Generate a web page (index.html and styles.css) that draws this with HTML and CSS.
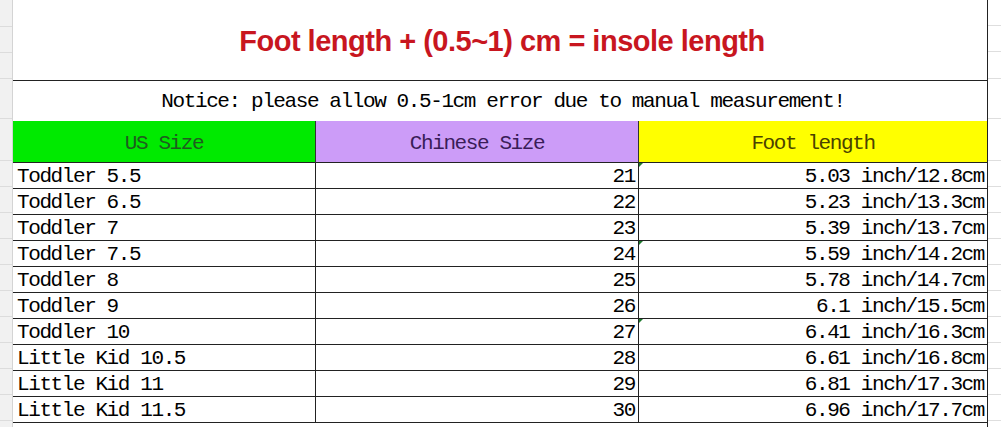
FILE: index.html
```html
<!DOCTYPE html>
<html>
<head>
<meta charset="utf-8">
<link rel="stylesheet" href="styles.css">
</head>
<body>
<div class="sheet">
  <div class="gutter gutter-left">
    <div class="g" style="height:27px"></div>
    <div class="g" style="height:26px"></div>
    <div class="g" style="height:26px"></div>
    <div class="g" style="height:40px"></div>
    <div class="g" style="height:42px"></div>
    <div class="g r"></div><div class="g r"></div><div class="g r"></div><div class="g r"></div><div class="g r"></div>
    <div class="g r"></div><div class="g r"></div><div class="g r"></div><div class="g r"></div><div class="g r"></div>
  </div>
  <div class="table">
    <div class="title"><span>Foot length + (0.5~1) cm = insole length</span></div>
    <div class="notice">Notice: please allow 0.5-1cm error due to manual measurement!</div>
    <div class="grid">
      <div class="hd c1">US Size</div>
      <div class="hd c2">Chinese Size</div>
      <div class="hd c3">Foot length</div>

      <div class="cell l">Toddler 5.5</div><div class="cell n">21</div><div class="cell n m">5.03 inch/12.8cm</div>
      <div class="cell l">Toddler 6.5</div><div class="cell n">22</div><div class="cell n">5.23 inch/13.3cm</div>
      <div class="cell l">Toddler 7</div><div class="cell n">23</div><div class="cell n">5.39 inch/13.7cm</div>
      <div class="cell l">Toddler 7.5</div><div class="cell n">24</div><div class="cell n m">5.59 inch/14.2cm</div>
      <div class="cell l">Toddler 8</div><div class="cell n">25</div><div class="cell n">5.78 inch/14.7cm</div>
      <div class="cell l">Toddler 9</div><div class="cell n">26</div><div class="cell n">6.1 inch/15.5cm</div>
      <div class="cell l">Toddler 10</div><div class="cell n">27</div><div class="cell n m">6.41 inch/16.3cm</div>
      <div class="cell l">Little Kid 10.5</div><div class="cell n">28</div><div class="cell n">6.61 inch/16.8cm</div>
      <div class="cell l">Little Kid 11</div><div class="cell n">29</div><div class="cell n">6.81 inch/17.3cm</div>
      <div class="cell l">Little Kid 11.5</div><div class="cell n">30</div><div class="cell n">6.96 inch/17.7cm</div>
    </div>
  </div>
  <div class="gutter gutter-right">
    <div class="g2" style="height:26px"></div>
    <div class="g2" style="height:26px"></div>
    <div class="g2" style="height:27px"></div>
    <div class="g2" style="height:40px"></div>
    <div class="g2" style="height:42px"></div>
    <div class="g2 r"></div><div class="g2 r"></div><div class="g2 r"></div><div class="g2 r"></div><div class="g2 r"></div>
    <div class="g2 r"></div><div class="g2 r"></div><div class="g2 r"></div><div class="g2 r"></div><div class="g2 r"></div>
  </div>
</div>
</body>
</html>
```
FILE: styles.css
```css
html, body {
  margin: 0;
  padding: 0;
  background: #ffffff;
}
.sheet {
  display: flex;
  width: 1001px;
  height: 427px;
  overflow: hidden;
}
.gutter {
  display: flex;
  flex-direction: column;
}
.gutter-left {
  width: 12px;
  background: #f1f1f1;
  border-right: 1px solid #d4d4d4;
}
.g {
  box-sizing: border-box;
  border-bottom: 1px solid #dcdcdc;
  flex: none;
}
.g.r { height: 26px; }
.gutter-right {
  width: 13px;
  background: #ffffff;
}
.g2 {
  box-sizing: border-box;
  border-bottom: 1px solid #dedede;
  flex: none;
}
.g2.r { height: 26px; }
.table {
  width: 974px;
  flex: none;
  border-right: 1px solid #222;
  display: flex;
  flex-direction: column;
}
.title {
  height: 78px;
  border-bottom: 1px solid #222;
  display: flex;
  align-items: center;
  justify-content: center;
  font-family: "Liberation Sans", Arial, sans-serif;
  font-weight: bold;
  font-size: 29px;
  color: #c8161f;
  padding-left: 4px;
  padding-top: 2px;
  box-sizing: content-box;
}
.title span {
  letter-spacing: -0.5px;
  text-shadow: 0 0 3px #fff;
}
.notice {
  height: 40px;
  display: flex;
  align-items: center;
  justify-content: center;
  font-family: "Liberation Mono", "Courier New", monospace;
  font-size: 21px;
  letter-spacing: -1.4px;
  color: #000;
  padding-left: 6px;
}
.grid {
  display: grid;
  grid-template-columns: 303px 323px 348px;
  grid-template-rows: 42px repeat(10, 26px);
  font-family: "Liberation Mono", "Courier New", monospace;
  font-size: 21px;
  letter-spacing: -1.4px;
}
.hd {
  display: flex;
  align-items: center;
  justify-content: center;
  border-bottom: 1px solid #222;
  box-sizing: border-box;
  border-right: 1px solid #333;
  padding-top: 3px;
}
.hd.c1 { background: #00ea00; color: #1f5c1f; }
.hd.c2 { background: #cc9cf8; color: #3a1c58; }
.hd.c3 { background: #ffff00; color: #4a4200; border-right: none; }
.cell {
  box-sizing: border-box;
  border-bottom: 1px solid #222;
  border-right: 1px solid #222;
  display: flex;
  align-items: flex-end;
  padding-bottom: 0;
  color: #000;
  position: relative;
}
.cell.l { padding-left: 4px; }
.cell.n { justify-content: flex-end; padding-right: 3px; }
.cell:nth-child(3n) { border-right: none; }
.cell.m::before {
  content: "";
  position: absolute;
  left: 0;
  top: 0;
  width: 0;
  height: 0;
  border-top: 4px solid #1e7a2e;
  border-right: 4px solid transparent;
}
```
